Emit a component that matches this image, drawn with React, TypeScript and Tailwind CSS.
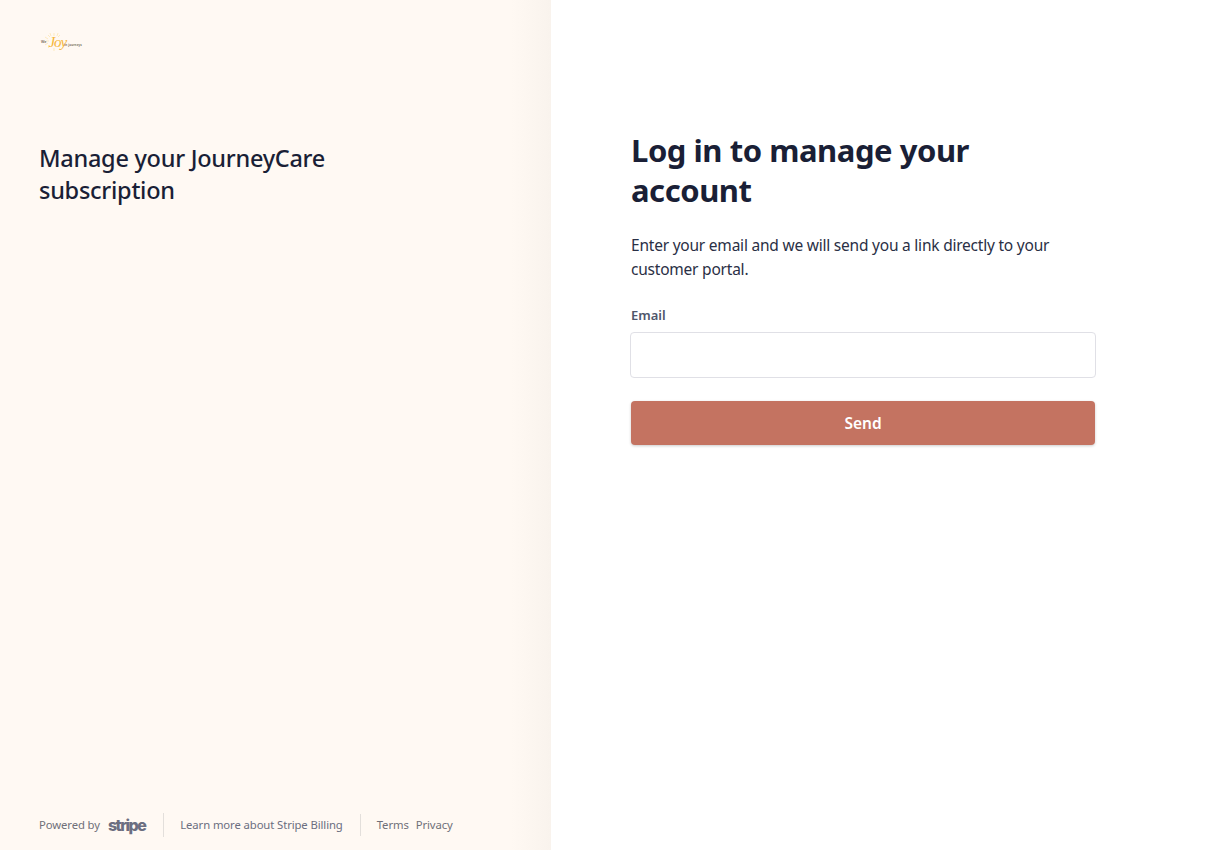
export default function App() {
  return (
    <div className="flex h-[850px] w-full overflow-hidden bg-white font-['Noto_Sans',sans-serif] text-[#1a1f36]">
      <aside className="relative flex w-[551px] shrink-0 flex-col bg-[#fff9f3] pl-[39px]">
        <div className="pointer-events-none absolute inset-y-0 right-0 w-[40px] bg-gradient-to-r from-transparent to-[#f9f3ed]" />
        <div className="relative mt-[32px] flex h-[20px] w-[44px] items-center">
          <svg className="absolute left-[4px] top-0 h-[20px] w-[24px]" viewBox="0 0 24 20" fill="none" stroke="#fbdf9f" strokeWidth="0.6">
            <path d="M11 1v3M11 16v3M3 9h3M17 3l-2 2M5 3l2 2M5 16l2-2M17 15l-2-2M7 1l1 3M15 1l-1 3M2 5l3 2M2 13l3-2" />
          </svg>
          <span className="relative ml-[2px] text-[3.5px] font-bold leading-none text-[#7d7468]">We</span>
          <span className="relative ml-[2px] font-['Liberation_Serif',serif] text-[15px] italic leading-none tracking-[-1px] text-[#f6b73c]">Joy</span>
          <span className="relative ml-[-2px] mt-[6px] whitespace-nowrap text-[3px] font-bold leading-none tracking-[0.1px] text-[#7d7468]">in journeys</span>
        </div>
        <h1 className="mt-[90px] w-[320px] text-[23.5px] font-medium leading-[32px] tracking-[-0.27px]">Manage your JourneyCare subscription</h1>
        <footer className="mt-auto mb-[13px] flex h-[24px] items-center text-[11.3px] tracking-[-0.1px] text-[#6f7079]">
          <span>Powered by</span>
          <span className="ml-[8px] font-['Inter',sans-serif] text-[16px] font-extrabold leading-none tracking-[-1.5px] text-[#6b6e80]">stripe</span>
          <span className="ml-[18px] h-[24px] w-px bg-[#e3dfdb]" />
          <span className="ml-[16px] text-[#6b6e80]">Learn more about Stripe Billing</span>
          <span className="ml-[17px] h-[22px] w-px bg-[#e3dfdb]" />
          <span className="ml-[16px]">Terms</span>
          <span className="ml-[7px]">Privacy</span>
        </footer>
      </aside>
      <main className="flex-1 pl-[80px]">
        <div className="mt-[130px] w-[464px]">
          <h2 className="text-[31px] font-bold leading-[40px] tracking-[-0.45px] text-[#1a1f36]">Log in to manage your account</h2>
          <p className="mt-[23px] text-[15.5px] leading-[24px] tracking-[-0.22px] text-[#2a2f45]">Enter your email and we will send you a link directly to your customer portal.</p>
          <label className="mt-[24px] block text-[13px] font-semibold leading-[20px] text-[#4f566b]">Email</label>
          <input className="mt-[7px] -ml-px block h-[46px] w-[466px] rounded-[4px] border border-[#e0e0e6] bg-white" />
          <button className="mt-[23px] flex h-[44px] w-full items-center justify-center rounded-[4px] bg-[#c47361] pt-[2px] text-[15.5px] font-semibold text-white shadow-[0_1px_3px_rgba(0,0,0,0.2)]">Send</button>
        </div>
      </main>
    </div>
  );
}
